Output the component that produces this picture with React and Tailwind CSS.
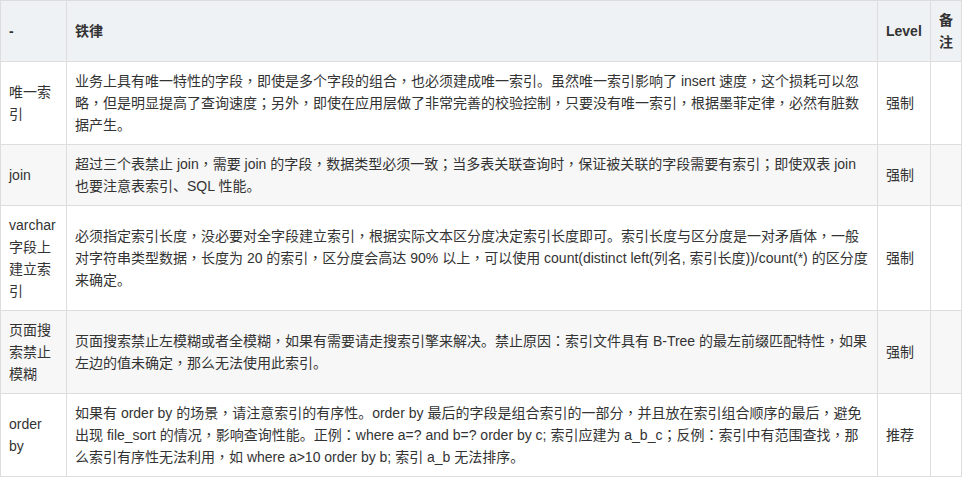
const rows = [
  {
    name: "唯一索引",
    rule: "业务上具有唯一特性的字段，即使是多个字段的组合，也必须建成唯一索引。虽然唯一索引影响了 insert 速度，这个损耗可以忽略，但是明显提高了查询速度；另外，即使在应用层做了非常完善的校验控制，只要没有唯一索引，根据墨菲定律，必然有脏数据产生。",
    level: "强制",
  },
  {
    name: "join",
    rule: "超过三个表禁止 join，需要 join 的字段，数据类型必须一致；当多表关联查询时，保证被关联的字段需要有索引；即使双表 join 也要注意表索引、SQL 性能。",
    level: "强制",
  },
  {
    name: "varchar 字段上建立索引",
    rule: "必须指定索引长度，没必要对全字段建立索引，根据实际文本区分度决定索引长度即可。索引长度与区分度是一对矛盾体，一般对字符串类型数据，长度为 20 的索引，区分度会高达 90% 以上，可以使用 count(distinct left(列名, 索引长度))/count(*) 的区分度来确定。",
    level: "强制",
  },
  {
    name: "页面搜索禁止模糊",
    rule: "页面搜索禁止左模糊或者全模糊，如果有需要请走搜索引擎来解决。禁止原因：索引文件具有 B-Tree 的最左前缀匹配特性，如果左边的值未确定，那么无法使用此索引。",
    level: "强制",
  },
  {
    name: "order by",
    rule: "如果有 order by 的场景，请注意索引的有序性。order by 最后的字段是组合索引的一部分，并且放在索引组合顺序的最后，避免出现 file_sort 的情况，影响查询性能。正例：where a=? and b=? order by c; 索引应建为 a_b_c；反例：索引中有范围查找，那么索引有序性无法利用，如 where a>10 order by b; 索引 a_b 无法排序。",
    level: "推荐",
  },
];

// centered full-width punctuation, like the original font
// (Liberation Sans stays first so the line box keeps the same metrics)
const renderRule = (text) =>
  text.split(/([，；：])/).map((part, i) =>
    /^[，；：]$/.test(part) ? (
      <span key={i} className="font-['Liberation_Sans','Noto_Sans_CJK_TC',sans-serif]">
        {part}
      </span>
    ) : (
      part
    )
  );

export default function App() {
  return (
    <div className="bg-white w-[962px] h-[477px] overflow-hidden font-['Liberation_Sans','Noto_Sans_CJK_SC',sans-serif] text-[14px] leading-[22px] text-[#333]">
      <table className="w-[961px] table-fixed border-collapse">
        <colgroup>
          <col className="w-[66px]" />
          <col className="w-[811px]" />
          <col className="w-[53px]" />
          <col className="w-[31px]" />
        </colgroup>

        <thead>
          <tr className="bg-[#eff2f5]">
            <th className="border border-[#ddd] px-2 py-2 text-left font-bold align-middle">-</th>
            <th className="border border-[#ddd] px-2 py-2 text-left font-bold align-middle">铁律</th>
            <th className="border border-[#ddd] px-2 py-2 text-left font-bold align-middle whitespace-nowrap">Level</th>
            <th className="border border-[#ddd] px-2 py-2 text-left font-bold align-middle">备注</th>
          </tr>
        </thead>

        <tbody>
          {rows.map((row, idx) => (
            <tr key={idx} className={idx % 2 === 1 ? "bg-[#f7f7f7]" : "bg-white"}>
              <td className="border border-[#ddd] px-2 py-2 align-middle">{row.name}</td>
              <td className="border border-[#ddd] px-2 py-2 align-middle">{renderRule(row.rule)}</td>
              <td className="border border-[#ddd] px-2 py-2 align-middle">{row.level}</td>
              <td className="border border-[#ddd] px-2 py-2 align-middle"></td>
            </tr>
          ))}
        </tbody>
      </table>
    </div>
  );
}
